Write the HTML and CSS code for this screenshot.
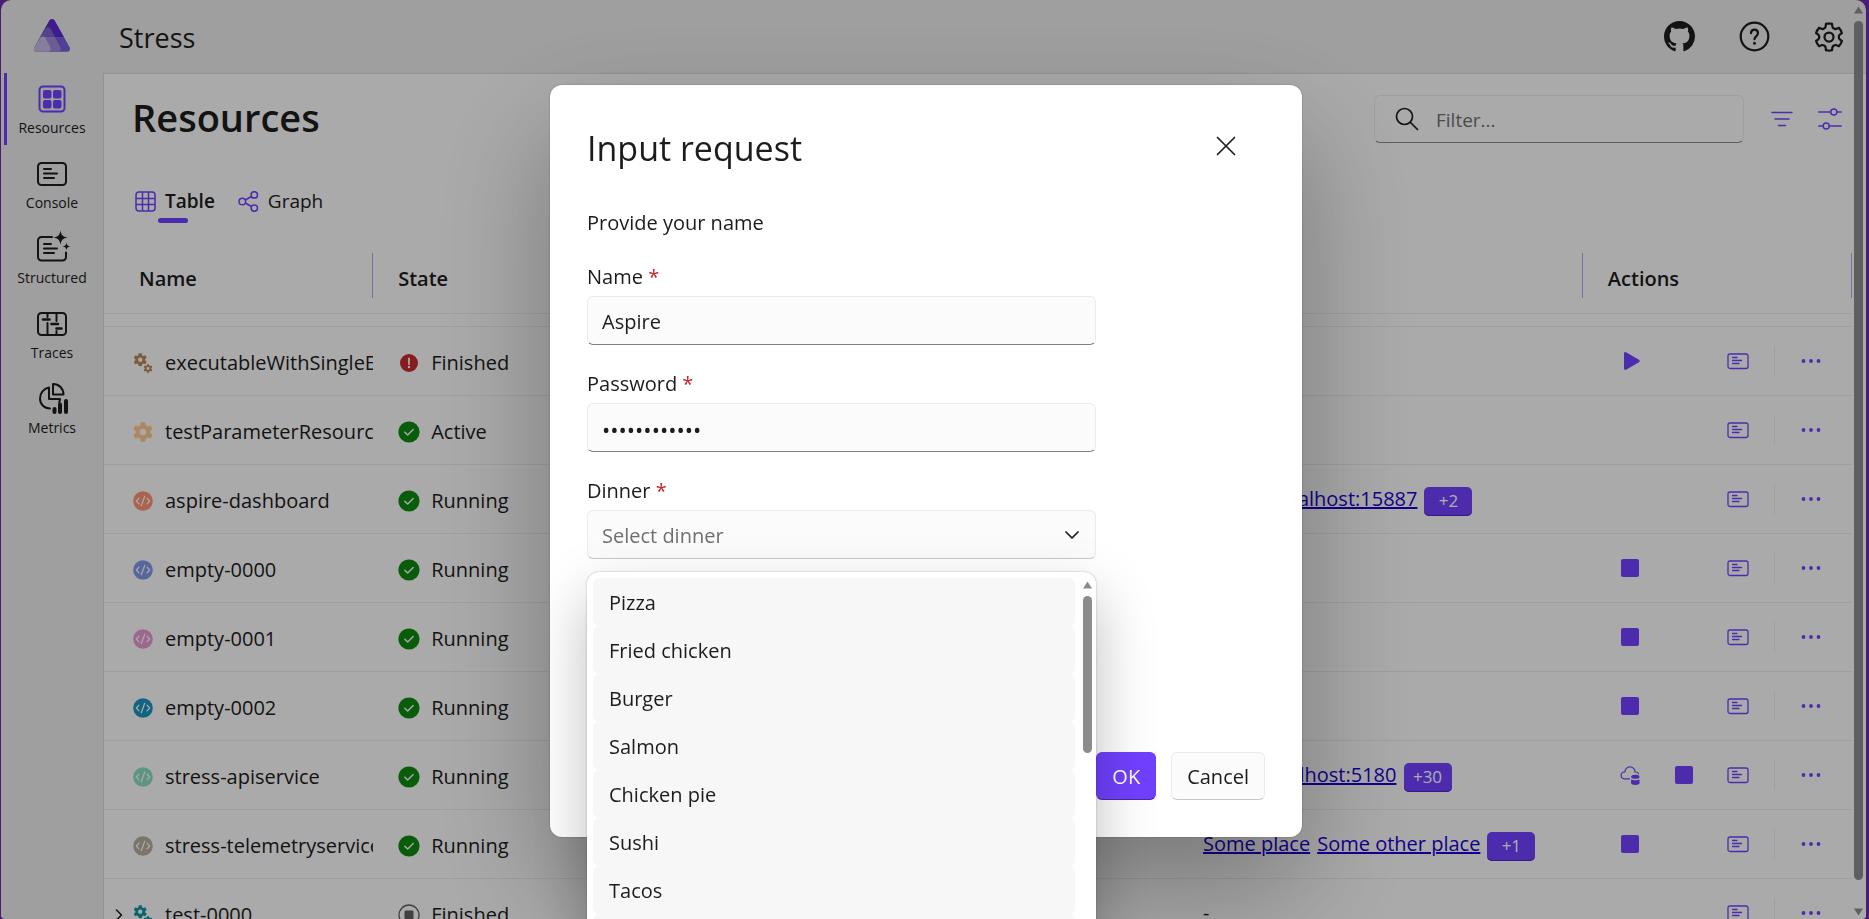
FILE: index.html
```html
<!DOCTYPE html>
<html lang="en">
<head>
<meta charset="utf-8">
<title>Stress resources</title>
<link rel="stylesheet" href="styles.css">
</head>
<body>
<svg class="sprite" aria-hidden="true">
  <symbol id="i-console" viewBox="0 0 30 30"><g fill="none" stroke="currentColor" stroke-width="2" stroke-linecap="round"><rect x="1" y="4" width="28" height="22" rx="3.500"/><path d="M7 10h7M7 14.500h13M7 19h10"/></g></symbol>
  <symbol id="i-console-sm" viewBox="0 0 22 22"><g fill="none" stroke="currentColor" stroke-width="1.300" stroke-linecap="round"><rect x="1" y="4" width="20" height="14.500" rx="2"/><path d="M5.500 7.500h4.500M5.500 10.500h9M5.500 13.500h6.500"/></g></symbol>
  <symbol id="i-gear" viewBox="2 2 20 20"><path fill="currentColor" fill-rule="evenodd" d="M9.900 2.300h4.200l.8 3.200 1.400.8 3.200-.9 2.100 3.600-2.400 2.300v1.400l2.400 2.300-2.100 3.600-3.200-.9-1.400.8-.8 3.200H9.900l-.8-3.200-1.400-.8-3.200.9L2.400 15l2.400-2.300v-1.400L2.400 9l2.100-3.600 3.200.9 1.400-.8zM12 8.800a3.200 3.200 0 1 0 0 6.400 3.200 3.200 0 0 0 0-6.400z"/></symbol>
  <symbol id="i-gears" viewBox="0 0 20 20"><use href="#i-gear" x="0.500" y="0" width="13.500" height="13.500"/><use href="#i-gear" x="10.500" y="11" width="9" height="9"/></symbol>
  <symbol id="i-code" viewBox="0 0 20 20"><circle cx="10" cy="10" r="9.800" fill="currentColor"/><path d="M6 7.200 3.300 10 6 12.800M14 7.200l2.700 2.800-2.700 2.800M11.700 5.300 8.300 14.700" fill="none" stroke="#fbfbfb" stroke-width="1.200" stroke-linecap="round" stroke-linejoin="round"/></symbol>
  <symbol id="i-check" viewBox="0 0 22 22"><circle cx="11" cy="11" r="10.600" fill="#0e8a10"/><path d="m6.800 11.200 2.900 2.900 5.500-5.500" fill="none" stroke="#fbfbfb" stroke-width="1.400" stroke-linecap="round" stroke-linejoin="round"/></symbol>
  <symbol id="i-error" viewBox="0 0 22 22"><circle cx="11" cy="11" r="9" fill="#c42b30"/><path d="M11 6.500v5.500" stroke="#fbfbfb" stroke-width="1.800" stroke-linecap="round"/><circle cx="11" cy="15" r="1.200" fill="#fbfbfb"/></symbol>
  <symbol id="i-ended" viewBox="0 0 22 22"><circle cx="11" cy="11" r="10" fill="none" stroke="#616161" stroke-width="1.300"/><rect x="6.500" y="6.500" width="9" height="9" rx="1.200" fill="#616161"/></symbol>
  <symbol id="i-play" viewBox="0 0 20 20"><path d="M4 2.400C4 1.300 5.100.7 6 1.200l13 7.600c.9.600.9 1.800 0 2.400L6 18.800c-.9.500-2-.1-2-1.200z" fill="currentColor"/></symbol>
  <symbol id="i-stop" viewBox="0 0 20 20"><rect x="1" y="1" width="18" height="18" rx="2" fill="currentColor"/></symbol>
  <symbol id="i-cloud" viewBox="0 0 20 20"><path d="M9.500 13.800H4.700a3.400 3.400 0 0 1-.3-6.800h.5a5.100 5.100 0 0 1 10.200 0h.5c1.400 0 2.400.6 3 1.700" fill="none" stroke="currentColor" stroke-width="1.200" stroke-linecap="round"/><ellipse cx="15.300" cy="11.800" rx="4.200" ry="2" fill="currentColor"/><path d="M11.100 14.200c1.800 1.500 6.600 1.500 8.400 0v4c0 2.300-8.400 2.300-8.400 0z" fill="currentColor"/></symbol>
  <symbol id="i-dots" viewBox="0 0 20 20"><g fill="currentColor"><circle cx="2.500" cy="10" r="1.900"/><circle cx="10" cy="10" r="1.900"/><circle cx="17.500" cy="10" r="1.900"/></g></symbol>
</svg>

<div class="app">
  <header class="topbar">
    <a class="logo" href="#" aria-label="Home">
      <svg width="36" height="33" viewBox="0 0 36 33">
        <path d="M15.400 1.600a3 3 0 0 1 5.200 0L35.500 28a3 3 0 0 1-2.600 4.700H3.100A3 3 0 0 1 .5 28z" fill="#7b5cdc"/>
        <path d="M15.400 1.600a3 3 0 0 1 5.200 0L29.800 18H6.200z" fill="#5a2cd0"/>
        <path d="M11.200 10a3 3 0 0 1 5.200 0l9.800 18a3 3 0 0 1-2.400 4.700H3.100A3 3 0 0 1 .5 28z" fill="#9c88dc"/>
        <path d="M11.200 10a3 3 0 0 1 5.200 0l4.400 8H6.600z" fill="#7e62cc"/>
        <path d="M6.400 18.800a3 3 0 0 1 5 0L16.200 28a3 3 0 0 1-2.400 4.700H3.100A3 3 0 0 1 .5 28z" fill="#c6bae4"/>
      </svg>
    </a>
    <span class="app-name">Stress</span>
    <nav class="top-actions">
      <a href="#" aria-label="GitHub repository"><svg width="31" height="31" viewBox="0 0 16 16"><path fill="currentColor" d="M8 0C3.580 0 0 3.580 0 8c0 3.540 2.290 6.530 5.470 7.590.4.070.55-.17.55-.38 0-.19-.01-.82-.01-1.490-2.010.37-2.530-.49-2.690-.94-.09-.23-.48-.94-.82-1.130-.28-.15-.68-.52-.01-.53.63-.01 1.080.58 1.230.82.72 1.210 1.870.87 2.330.66.070-.52.28-.87.51-1.070-1.780-.2-3.640-.89-3.640-3.950 0-.87.31-1.590.82-2.150-.08-.2-.36-1.020.08-2.120 0 0 .67-.21 2.200.82.64-.18 1.320-.27 2-.27s1.360.09 2 .27c1.530-1.040 2.200-.82 2.200-.82.44 1.100.16 1.920.08 2.120.51.56.82 1.270.82 2.150 0 3.070-1.870 3.750-3.650 3.950.29.25.54.73.54 1.480 0 1.070-.01 1.930-.01 2.200 0 .21.15.46.55.38A8.010 8.010 0 0 0 16 8c0-4.420-3.580-8-8-8z"/></svg></a>
      <button type="button" aria-label="Help"><svg width="31" height="31" viewBox="0 0 31 31" fill="none" stroke="currentColor" stroke-width="2.200" stroke-linecap="round"><circle cx="15.500" cy="15.500" r="13.800"/><path d="M12 12.200c0-4.800 7-4.800 7 0 0 2.800-3.500 3-3.500 6"/><circle cx="15.500" cy="22.300" r="1.500" fill="currentColor" stroke="none"/></svg></button>
      <button type="button" aria-label="Settings"><svg width="36" height="36" viewBox="0 0 24 24"><path fill="currentColor" fill-rule="evenodd" d="M12.010 2.250c.74 0 1.470.1 2.180.25.32.070.55.33.59.65l.17 1.530a1.380 1.380 0 0 0 1.920 1.110l1.400-.61c.3-.13.64-.06.85.17a9.800 9.800 0 0 1 2.200 3.800c.1.3 0 .63-.26.82l-1.250.92a1.380 1.380 0 0 0 0 2.220l1.250.92c.26.19.36.52.27.82a9.800 9.800 0 0 1-2.200 3.800.75.75 0 0 1-.85.17l-1.400-.62a1.380 1.380 0 0 0-1.930 1.120l-.17 1.520a.75.75 0 0 1-.58.65 9.520 9.520 0 0 1-4.400 0 .75.75 0 0 1-.57-.65l-.17-1.520a1.380 1.380 0 0 0-1.930-1.110l-1.400.62a.75.75 0 0 1-.85-.18 9.800 9.800 0 0 1-2.200-3.800c-.1-.3 0-.63.26-.82l1.250-.92a1.380 1.380 0 0 0 0-2.220l-1.240-.92a.75.75 0 0 1-.28-.82 9.800 9.800 0 0 1 2.200-3.800c.23-.23.57-.3.86-.17l1.400.62c.4.17.86.15 1.250-.08.38-.22.63-.6.68-1.040l.17-1.530a.75.75 0 0 1 .58-.65c.72-.16 1.450-.24 2.200-.25Zm0 1.500c-.45 0-.9.040-1.350.12l-.11.97a2.890 2.890 0 0 1-4.030 2.330l-.9-.4A8.300 8.300 0 0 0 4.290 9.100l.8.59a2.880 2.880 0 0 1 0 4.640l-.8.59c.3.85.76 1.640 1.350 2.330l.9-.4a2.880 2.880 0 0 1 4.020 2.330l.1.97c.9.16 1.810.16 2.700 0l.1-.97a2.890 2.890 0 0 1 4.020-2.330l.9.4a8.300 8.300 0 0 0 1.350-2.330l-.8-.59a2.880 2.880 0 0 1 0-4.640l.8-.59a8.300 8.300 0 0 0-1.350-2.330l-.9.4a2.880 2.880 0 0 1-4.020-2.320l-.1-.98c-.45-.08-.9-.11-1.350-.12ZM12 8.250a3.750 3.750 0 1 1 0 7.500 3.750 3.750 0 0 1 0-7.500Zm0 1.500a2.250 2.250 0 1 0 0 4.500 2.250 2.250 0 0 0 0-4.500Z"/></svg></button>
    </nav>
  </header>

  <div class="body">
    <nav class="sidebar">
      <a class="nav-item active" href="#"><svg width="30" height="30" viewBox="0 0 30 30"><rect x="2.500" y="2.500" width="25" height="25" rx="3.500" fill="none" stroke="currentColor" stroke-width="2"/><g fill="currentColor"><rect x="6" y="6" width="8.500" height="8.500" rx="2"/><rect x="16" y="6" width="8.500" height="8.500" rx="2"/><rect x="6" y="16" width="8.500" height="8.500" rx="2"/><rect x="16" y="16" width="8.500" height="8.500" rx="2"/></g></svg><span>Resources</span></a>
      <a class="nav-item" href="#"><svg width="30" height="30"><use href="#i-console"/></svg><span>Console</span></a>
      <a class="nav-item" href="#"><svg width="30" height="30" viewBox="0 0 30 30" overflow="visible"><g fill="none" stroke="currentColor" stroke-width="2" stroke-linecap="round"><path d="M15 3H4.500A3.500 3.500 0 0 0 1 6.500V23a3.500 3.500 0 0 0 3.500 3.500h21A3.500 3.500 0 0 0 29 23V18.500M7 10h7M7 14.500h13M7 19h10"/></g><path fill="currentColor" d="M23.500-3.500c1 5 2.200 6.200 7 7-4.800 1-6 2.200-7 7-1-4.800-2.200-6-7-7 4.800-.8 6-2 7-7zM29.500 8.500c.6 2.800 1 3.300 3.800 3.900-2.800.6-3.200 1-3.800 3.800-.6-2.800-1-3.200-3.800-3.800 2.800-.6 3.200-1.100 3.800-3.900z"/></svg><span>Structured</span></a>
      <a class="nav-item" href="#"><svg width="30" height="30" viewBox="0 0 30 30" fill="none" stroke="currentColor" stroke-width="2" stroke-linecap="round"><rect x="1" y="4" width="28" height="22" rx="3.500"/><path d="M10.500 4v4M10.500 14v12M19.500 4v8M19.500 22v4"/><path d="M6 10.500h6.500M14.500 15h6.500M19.500 19.500h5" stroke-width="2.600"/></svg><span>Traces</span></a>
      <a class="nav-item" href="#"><svg width="30" height="30" viewBox="0 0 30 30" overflow="visible"><g fill="none" stroke="currentColor" stroke-width="2" stroke-linejoin="round" stroke-linecap="round"><path d="M16 0v10.500h10.500C26.500 4.500 22 0 16 0z"/><path d="M12 3.500C6.500 4.500 3 9 3 14.500c0 6 4.500 10 10 10M12 3.500V15h11c0 1-.3 2-.8 3"/></g><path d="M17.500 28v-3M23 28v-7.500M29 28V17" fill="none" stroke="currentColor" stroke-width="4" stroke-linecap="round"/></svg><span>Metrics</span></a>
    </nav>

    <main class="content">
      <div class="page-head">
        <h1>Resources</h1>
        <label class="search"><svg width="24" height="24" viewBox="0 0 24 24" fill="none" stroke="currentColor" stroke-width="1.700" stroke-linecap="round"><circle cx="9.500" cy="9.500" r="8"/><path d="m15.500 15.500 7 7"/></svg><input type="search" placeholder="Filter..." aria-label="Filter"></label>
        <button class="tool" type="button" aria-label="Filters"><svg width="24" height="24" viewBox="0 0 24 24" stroke="currentColor" stroke-width="1.500" stroke-linecap="round"><path d="M2 5.500h20M5 12h14M8.500 18.500h7"/></svg></button>
        <button class="tool" type="button" aria-label="View options"><svg width="24" height="24" viewBox="0 0 24 24" fill="none" stroke="currentColor" stroke-width="1.500" stroke-linecap="round"><path d="M.8 5H12.500M19 5h4.200M.8 19H5M11.500 19h11.700"/><circle cx="15.800" cy="5" r="3"/><circle cx="8.200" cy="19" r="3"/></svg></button>
      </div>
      <div class="tabs" role="tablist">
        <button class="tab selected" type="button" role="tab" aria-selected="true"><svg width="21" height="21" viewBox="0 0 21 21" fill="none" stroke="currentColor" stroke-width="1.500"><rect x="1" y="1" width="19" height="19" rx="3"/><path d="M7.500 1v19M13.500 1v19M1 7.500h19M1 13.500h19"/></svg><span>Table</span></button>
        <button class="tab" type="button" role="tab" aria-selected="false"><svg width="21" height="21" viewBox="0 0 21 21" fill="none" stroke="currentColor" stroke-width="1.500"><circle cx="4.300" cy="10.500" r="3.300"/><circle cx="16.300" cy="3.900" r="3.200"/><circle cx="16.300" cy="17.100" r="3.200"/><path d="m7.200 9 6.300-3.500M7.200 12l6.300 3.500"/></svg><span>Graph</span></button>
      </div>

      <table class="grid">
        <colgroup><col class="c-name"><col><col class="c-urls"><col class="c-actions"></colgroup>
        <thead><tr><th>Name</th><th>State</th><th>URLs</th><th>Actions</th></tr></thead>
        <tbody>
          <tr class="partial"><td></td><td></td><td></td><td></td></tr>
          <tr>
            <td><div class="name"><i class="toggle"></i><svg class="c-brown"><use href="#i-gears"/></svg><span>executableWithSingleEndpoint</span></div></td>
            <td><div class="state"><svg><use href="#i-error"/></svg>Finished</div></td><td></td>
            <td><div class="acts"><button type="button" aria-label="Start"><svg><use href="#i-play"/></svg></button><i></i><button type="button" aria-label="Console logs"><svg class="lg"><use href="#i-console-sm"/></svg></button><button class="more" type="button" aria-label="More"><svg><use href="#i-dots"/></svg></button></div></td>
          </tr>
          <tr>
            <td><div class="name"><i class="toggle"></i><svg class="c-tan"><use href="#i-gear"/></svg><span>testParameterResource</span></div></td>
            <td><div class="state"><svg><use href="#i-check"/></svg>Active</div></td><td></td>
            <td><div class="acts"><i></i><i></i><button type="button" aria-label="Console logs"><svg class="lg"><use href="#i-console-sm"/></svg></button><button class="more" type="button" aria-label="More"><svg><use href="#i-dots"/></svg></button></div></td>
          </tr>
          <tr>
            <td><div class="name"><i class="toggle"></i><svg class="c-coral"><use href="#i-code"/></svg><span>aspire-dashboard</span></div></td>
            <td><div class="state"><svg><use href="#i-check"/></svg>Running</div></td>
            <td><div class="urls"><a href="#">https://localhost:15887</a><button type="button">+2</button></div></td>
            <td><div class="acts"><i></i><i></i><button type="button" aria-label="Console logs"><svg class="lg"><use href="#i-console-sm"/></svg></button><button class="more" type="button" aria-label="More"><svg><use href="#i-dots"/></svg></button></div></td>
          </tr>
          <tr>
            <td><div class="name"><i class="toggle"></i><svg class="c-blue"><use href="#i-code"/></svg><span>empty-0000</span></div></td>
            <td><div class="state"><svg><use href="#i-check"/></svg>Running</div></td><td></td>
            <td><div class="acts"><button type="button" aria-label="Stop"><svg><use href="#i-stop"/></svg></button><i></i><button type="button" aria-label="Console logs"><svg class="lg"><use href="#i-console-sm"/></svg></button><button class="more" type="button" aria-label="More"><svg><use href="#i-dots"/></svg></button></div></td>
          </tr>
          <tr>
            <td><div class="name"><i class="toggle"></i><svg class="c-pink"><use href="#i-code"/></svg><span>empty-0001</span></div></td>
            <td><div class="state"><svg><use href="#i-check"/></svg>Running</div></td><td></td>
            <td><div class="acts"><button type="button" aria-label="Stop"><svg><use href="#i-stop"/></svg></button><i></i><button type="button" aria-label="Console logs"><svg class="lg"><use href="#i-console-sm"/></svg></button><button class="more" type="button" aria-label="More"><svg><use href="#i-dots"/></svg></button></div></td>
          </tr>
          <tr>
            <td><div class="name"><i class="toggle"></i><svg class="c-cyan"><use href="#i-code"/></svg><span>empty-0002</span></div></td>
            <td><div class="state"><svg><use href="#i-check"/></svg>Running</div></td><td></td>
            <td><div class="acts"><button type="button" aria-label="Stop"><svg><use href="#i-stop"/></svg></button><i></i><button type="button" aria-label="Console logs"><svg class="lg"><use href="#i-console-sm"/></svg></button><button class="more" type="button" aria-label="More"><svg><use href="#i-dots"/></svg></button></div></td>
          </tr>
          <tr>
            <td><div class="name"><i class="toggle"></i><svg class="c-mint"><use href="#i-code"/></svg><span>stress-apiservice</span></div></td>
            <td><div class="state"><svg><use href="#i-check"/></svg>Running</div></td>
            <td><div class="urls"><a href="#">http://localhost:5180</a><button type="button">+30</button></div></td>
            <td><div class="acts"><button type="button" aria-label="Deploy"><svg><use href="#i-cloud"/></svg></button><button type="button" aria-label="Stop"><svg><use href="#i-stop"/></svg></button><button type="button" aria-label="Console logs"><svg class="lg"><use href="#i-console-sm"/></svg></button><button class="more" type="button" aria-label="More"><svg><use href="#i-dots"/></svg></button></div></td>
          </tr>
          <tr>
            <td><div class="name"><i class="toggle"></i><svg class="c-stone"><use href="#i-code"/></svg><span>stress-telemetryservice</span></div></td>
            <td><div class="state"><svg><use href="#i-check"/></svg>Running</div></td>
            <td><div class="urls"><a href="#">Some place</a><a href="#">Some other place</a><button type="button">+1</button></div></td>
            <td><div class="acts"><button type="button" aria-label="Stop"><svg><use href="#i-stop"/></svg></button><i></i><button type="button" aria-label="Console logs"><svg class="lg"><use href="#i-console-sm"/></svg></button><button class="more" type="button" aria-label="More"><svg><use href="#i-dots"/></svg></button></div></td>
          </tr>
          <tr>
            <td><div class="name"><button class="toggle" type="button" aria-label="Expand"><svg viewBox="0 0 12 16" fill="none" stroke="currentColor" stroke-width="1.500" stroke-linecap="round" stroke-linejoin="round"><path d="m1.500 3 5 5-5 5"/></svg></button><svg class="c-teal"><use href="#i-gears"/></svg><span>test-0000</span></div></td>
            <td><div class="state"><svg><use href="#i-ended"/></svg>Finished</div></td>
            <td><div class="urls">-</div></td>
            <td><div class="acts"><i></i><i></i><button type="button" aria-label="Console logs"><svg class="lg"><use href="#i-console-sm"/></svg></button><button class="more" type="button" aria-label="More"><svg><use href="#i-dots"/></svg></button></div></td>
          </tr>
        </tbody>
      </table>
    </main>
  </div>
  <div class="scrollbar page-scroll"><svg width="9" height="8" viewBox="0 0 9 8"><path d="M4.500.5 9 7.500H0z"/></svg><span class="thumb"></span><svg width="9" height="8" viewBox="0 0 9 8"><path d="M4.500 7.500 0 .5h9z"/></svg></div>
</div>

<div class="overlay">
  <form class="dialog" role="dialog" aria-labelledby="dlg-title">
    <div class="dialog-head">
      <h2 id="dlg-title">Input request</h2>
      <button class="close" type="button" aria-label="Close"><svg width="20" height="20" viewBox="0 0 20 20" stroke="currentColor" stroke-width="1.700" stroke-linecap="round"><path d="m1.500 1.500 17 17M18.500 1.500l-17 17"/></svg></button>
    </div>
    <p class="message">Provide your name</p>
    <div class="field">
      <label for="name">Name <em>*</em></label>
      <input id="name" type="text" value="Aspire">
    </div>
    <div class="field">
      <label for="password">Password <em>*</em></label>
      <input id="password" type="password" value="abcdefghijkl">
    </div>
    <div class="field">
      <label for="dinner">Dinner <em>*</em></label>
      <select id="dinner"><option>Select dinner</option></select>
      <svg class="caret" width="14" height="8" viewBox="0 0 14 8" fill="none" stroke="currentColor" stroke-width="1.700" stroke-linecap="round" stroke-linejoin="round"><path d="m1 1 6 6 6-6"/></svg>
      <div class="popup">
        <ul class="options" role="listbox" aria-label="Dinner">
          <li role="option">Pizza</li>
          <li role="option">Fried chicken</li>
          <li role="option">Burger</li>
          <li role="option">Salmon</li>
          <li role="option">Chicken pie</li>
          <li role="option">Sushi</li>
          <li role="option">Tacos</li>
          <li role="option"></li>
        </ul>
        <div class="scrollbar"><svg width="9" height="8" viewBox="0 0 9 8"><path d="M4.500.5 9 7.500H0z"/></svg><span class="thumb"></span></div>
      </div>
    </div>
    <div class="dialog-foot">
      <button class="btn primary" type="button">OK</button>
      <button class="btn" type="button">Cancel</button>
    </div>
  </form>
</div>
</body>
</html>
```

FILE: styles.css
```css
:root {
  --accent: #7140ff;
  --text: #1c1c1c;
  --line: #ebebeb;
}

* { box-sizing: border-box; }

body {
  margin: 0;
  height: 100vh;
  overflow: hidden;
  background: #6b2ca8;
  color: var(--text);
  font: 20px/28px "Open Sans", "Noto Sans", sans-serif;
}

button, input, select { font: inherit; color: inherit; }
button { padding: 0; border: 0; background: none; }
svg { flex: none; display: block; }
.sprite { position: absolute; width: 0; height: 0; }

.app {
  position: relative;
  display: flex;
  flex-direction: column;
  height: 100vh;
  margin: 0 3px 0 1px;
  overflow: hidden;
  background: #eaeaea;
  border-radius: 10px 10px 4px 4px;
}

/* Top bar */
.topbar {
  flex: none;
  display: flex;
  align-items: center;
  height: 73px;
  padding-right: 15px;
}
.logo { padding: 0 49px 3px 33px; }
.app-name { padding-top: 2px; font-size: 27px; }
.top-actions { display: flex; gap: 31px; margin-left: auto; }
.top-actions > * {
  display: flex;
  align-items: center;
  justify-content: center;
  width: 44px;
  height: 44px;
  color: var(--text);
}

.body { flex: 1; display: flex; min-height: 0; }

/* Side navigation */
.sidebar { flex: none; width: 102px; }
.nav-item {
  display: flex;
  flex-direction: column;
  align-items: center;
  gap: 4px;
  height: 75px;
  padding: 11px 0 0;
  font-size: 14px;
  line-height: 20px;
  color: var(--text);
  text-decoration: none;
}
.nav-item.active svg { color: var(--accent); }
.nav-item.active {
  background: linear-gradient(var(--accent), var(--accent)) 3px 0 / 3px 72px no-repeat;
}

/* Page */
.content {
  flex: 1;
  min-width: 0;
  overflow: hidden;
  background: #fbfbfb;
  border: solid #d8d8d8;
  border-width: 1px 0 0 1px;
}
.page-head {
  display: flex;
  align-items: center;
  height: 69px;
  padding: 21px 12px 0 28px;
}
h1 { margin: 0 auto 0 0; padding-bottom: 4px; font-size: 38px; line-height: 48px; font-weight: 600; }
.search {
  display: flex;
  align-items: center;
  gap: 17px;
  width: 370px;
  height: 48px;
  margin-right: 14px;
  padding: 0 20px;
  border: 1px solid var(--line);
  border-bottom-color: #8a8a8a;
  border-radius: 6px;
}
.search input { flex: 1; min-width: 0; border: 0; padding: 1px 0 0; background: none; outline: 0; font-size: 19px; }
.search input::placeholder { color: #707070; }
.tool { display: flex; justify-content: center; width: 48px; color: var(--accent); }

.tabs { display: flex; gap: 23px; height: 101px; padding: 40px 0 0 31px; }
.tab { display: flex; align-items: center; gap: 9px; height: 36px; position: relative; font-size: 19px; }
.tab svg { color: var(--accent); }
.tab.selected { font-weight: 600; }
.tab.selected::after {
  content: "";
  position: absolute;
  left: 23px;
  bottom: -4px;
  width: 30px;
  height: 5px;
  border-radius: 3px;
  background: var(--accent);
}

.grid { width: calc(100% - 14px); table-layout: fixed; border-collapse: collapse; }
.c-name, .c-actions { width: 15.4%; }
.c-urls { width: 23.1%; }
th, td { padding: 0; border-bottom: 1px solid var(--line); text-align: left; }
th {
  height: 69px;
  padding: 1px 0 0 25px;
  font-weight: 600;
  background: linear-gradient(#b6a3f4, #b6a3f4) right 9px / 1px 45px no-repeat;
}
th:first-child { padding-left: 35px; }
td { height: 69px; }
.partial td { height: 13px; }

.name { display: flex; align-items: center; overflow: hidden; padding: 4px 0 0 11px; white-space: nowrap; }
.name > svg { width: 20px; height: 20px; margin-right: 12px; }
.toggle { flex: none; width: 18px; height: 16px; }
.toggle svg { width: 12px; height: 16px; }
.state { display: flex; align-items: center; gap: 11px; padding: 4px 0 0 25px; }
.state svg { width: 22px; height: 22px; }

.urls { display: flex; align-items: center; gap: 7px; padding-left: 24px; white-space: nowrap; }
.urls a { color: #1a00d0; text-decoration-thickness: 2px; }
.urls button {
  width: 48px;
  height: 29px;
  margin-top: 5px;
  border-radius: 5px;
  background: var(--accent);
  color: #fff;
  font-size: 17px;
  box-shadow: inset 0 -1px #5028c0;
}

.acts { display: flex; align-items: center; padding-left: 20px; color: var(--accent); }
.acts > * { flex: none; display: flex; justify-content: center; width: 54px; color: var(--accent); }
.acts svg { width: 20px; height: 20px; }
.acts svg.lg { width: 22px; height: 22px; }
.acts .more { width: 73px; height: 30px; margin-left: 9px; align-items: center; border-left: 1px solid var(--line); }

.c-brown { color: #b88658; }
.c-tan { color: #ffc890; }
.c-coral { color: #fc9272; }
.c-blue { color: #8099e8; }
.c-pink { color: #e598d0; }
.c-cyan { color: #1b94c0; }
.c-mint { color: #8adcc0; }
.c-stone { color: #b5ad9c; }
.c-teal { color: #12949e; }

/* Scrollbars */
.scrollbar { display: flex; flex-direction: column; align-items: center; fill: #8c8c8c; }
.thumb { border-radius: 5px; background: #8c8c8c; }
.page-scroll { position: absolute; top: 0; right: 3px; bottom: 0; width: 9px; padding: 6px 0 3px; }
.page-scroll .thumb { flex: 1; width: 9px; margin: 7px 0 28px; }

/* Dialog */
.overlay {
  position: fixed;
  inset: 0;
  display: flex;
  align-items: center;
  justify-content: center;
  padding: 3px 17px 0 0;
  background: rgba(0, 0, 0, .32);
}
.dialog {
  display: flex;
  flex-direction: column;
  width: 752px;
  min-height: 752px;
  padding: 37px;
  border-radius: 12px;
  background: #fff;
  box-shadow: 0 51px 115px rgba(0, 0, 0, .3), 0 0 2px rgba(0, 0, 0, .3);
}
.dialog-head { display: flex; align-items: center; justify-content: space-between; height: 51px; }
h2 { margin: 0; font-size: 34px; line-height: 48px; font-weight: 400; }
.close { display: flex; align-items: center; justify-content: center; width: 48px; height: 48px; margin-right: 15px; padding-bottom: 3px; }
.message { margin: 36px 0 26px; }
.field { position: relative; width: 75%; margin-bottom: 25px; }
.field label { display: block; margin-bottom: 5px; }
.field em { color: #c4262e; font-style: normal; }
.field input, .field select {
  display: block;
  width: 100%;
  height: 49px;
  padding: 2px 14px 0;
  border: 1px solid var(--line);
  border-bottom-color: #808080;
  border-radius: 6px;
  background: #fbfbfb;
  outline: 0;
}
.field input[type="password"] { font-size: 22px; }
.field select { appearance: none; color: #707070; border-bottom-color: #c8c8c8; }
.caret { position: absolute; right: 17px; top: 54px; }

.popup {
  position: absolute;
  top: 95px;
  left: 0;
  right: 0;
  height: 390px;
  display: flex;
  padding: 6px 4px 0 6px;
  border-radius: 12px;
  background: #fff;
  box-shadow: 0 25px 58px rgba(0, 0, 0, .26), 0 0 2px rgba(0, 0, 0, .3);
}
.options { flex: 1; margin: 0 8px 0 0; padding: 0; list-style: none; }
.options li {
  height: 48px;
  padding: 11px 16px 0;
  border-radius: 6px;
  background: #f7f7f7;
}
.popup .scrollbar { width: 9px; padding-top: 3px; }
.popup .thumb { width: 9px; height: 157px; margin-top: 7px; }

.dialog-foot { display: flex; justify-content: flex-end; gap: 15px; margin-top: auto; }
.btn {
  height: 48px;
  padding: 2px 15px 0;
  border: 1px solid var(--line);
  border-bottom-color: #c8c8c8;
  border-radius: 6px;
  background: #fbfbfb;
}
.btn.primary { border-color: var(--accent); border-bottom-color: #4a2aa8; background: var(--accent); color: #fff; }
```
